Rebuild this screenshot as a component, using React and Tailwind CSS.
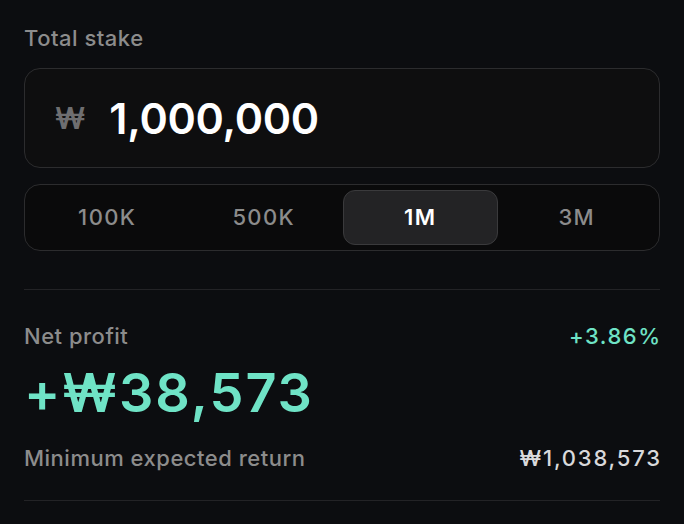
export default function App() {
  const presets = ['100K', '500K', '1M', '3M'];
  const active = '1M';
  return (
    <div className="min-h-screen w-full bg-[#0c0d10] px-6 pt-[26px] font-['Inter',sans-serif]">
      <div className="text-[22px] font-medium leading-6 tracking-[0.5px] text-[#8c8c8c]">Total stake</div>

      <div className="mt-[18px] flex h-[100px] items-center rounded-2xl border border-[#2c2c2e] bg-[#0e0e0f] px-[30px]">
        <span className="text-[30px] font-semibold text-[#6e6e70]">₩</span>
        <span className="ml-[24px] text-[43px] font-semibold tracking-[-0.3px] text-white">1,000,000</span>
      </div>

      <div className="mt-4 grid h-[67px] grid-cols-4 gap-0.5 rounded-2xl border border-[#2c2c2e] bg-[#0a0a0b] p-[5px]">
        {presets.map((p) => (
          <div
            key={p}
            className={
              p === active
                ? 'flex items-center justify-center rounded-xl border border-[#3a3a3c] bg-[#232325] text-[22px] font-semibold tracking-[1.4px] text-white'
                : 'flex items-center justify-center rounded-xl text-[22px] font-medium tracking-[1.4px] text-[#8c8c8c]'
            }
          >
            {p}
          </div>
        ))}
      </div>

      <div className="mt-[38px] h-px bg-[#232326]" />

      <div className="mt-[34px] flex items-center justify-between text-[22px] leading-6">
        <span className="font-medium tracking-[0.5px] text-[#8c8c8c]">Net profit</span>
        <span className="-mr-[1.5px] font-medium tracking-[1.5px] text-[#6fe3c6]">+3.86%</span>
      </div>

      <div className="mt-[15px] text-[54px] font-semibold leading-[60px] tracking-[2px] text-[#6fe3c6]">+₩38,573</div>

      <div className="mt-[23px] flex items-center justify-between text-[22px] leading-6">
        <span className="font-medium tracking-[0.5px] text-[#8c8c8c]">Minimum expected return</span>
        <span className="-mr-[1.8px] font-medium tracking-[1.8px] text-[#d9d9db]">₩1,038,573</span>
      </div>

      <div className="mt-[30px] h-px bg-[#232326]" />
    </div>
  );
}
